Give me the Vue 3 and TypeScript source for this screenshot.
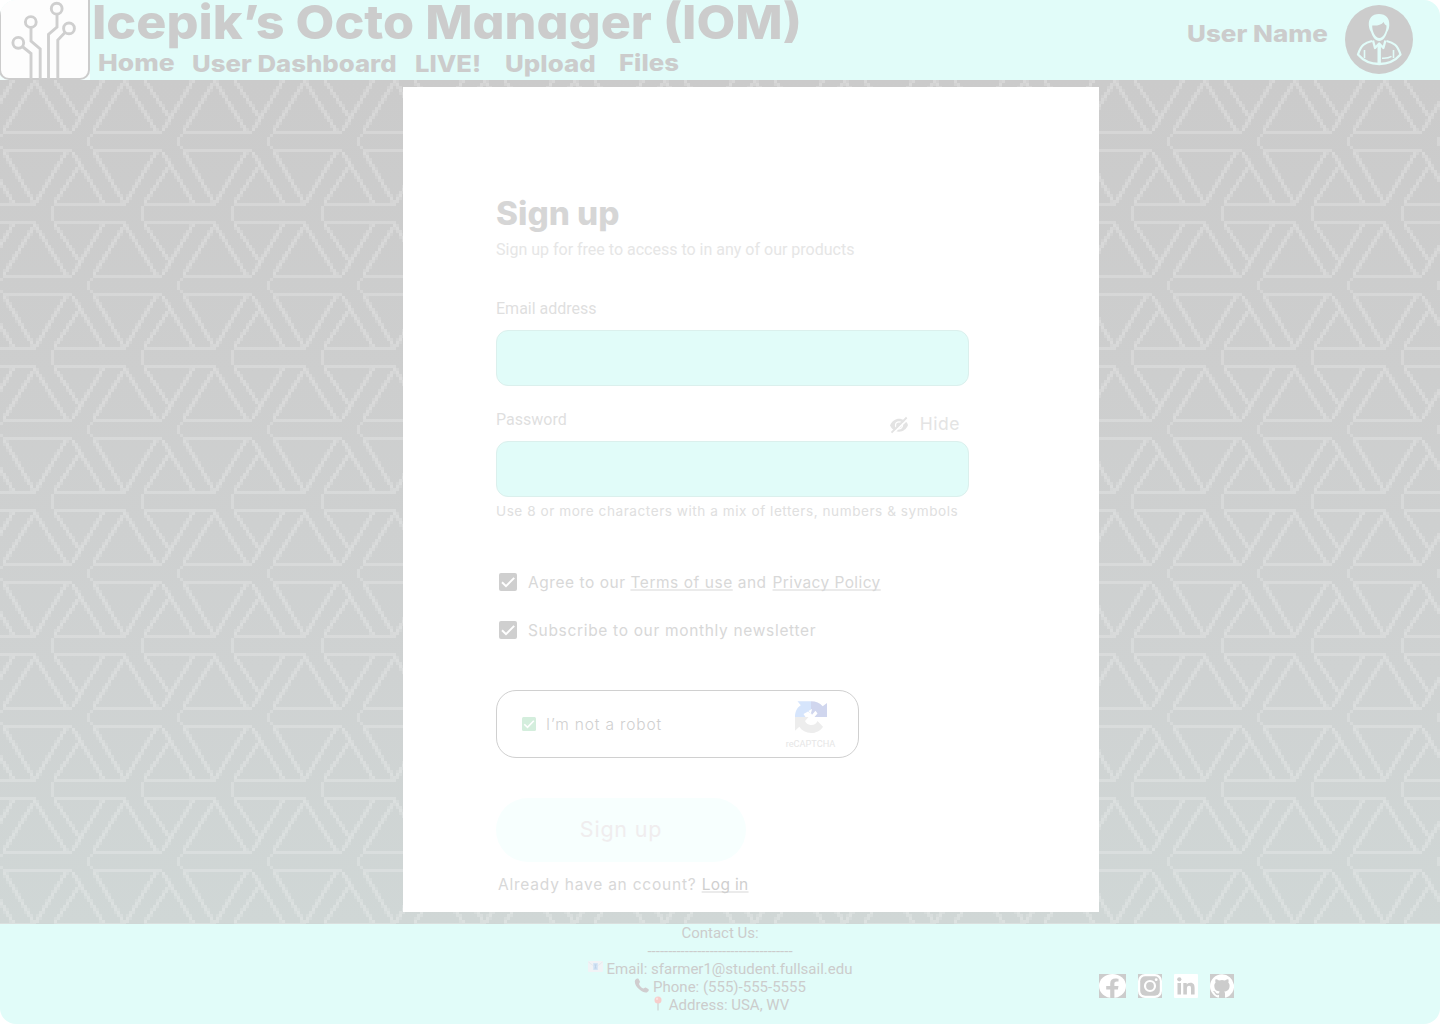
<script setup lang="ts">
interface Cell { x: number; y: number; a: number }

const COLS = 30
const ROWS = 48
const grid = new Map<string, Cell>()

function plot(x: number, y: number, a: number) {
  const cx = ((x % COLS) + COLS) % COLS
  const cy = ((y % ROWS) + ROWS) % ROWS
  const key = `${cx}:${cy}`
  const prev = grid.get(key)
  if (!prev || prev.a < a) grid.set(key, { x: cx, y: cy, a })
}

// Steep anti-aliased leg: one row at a time, coverage shared by two neighbouring cells.
function leg(x0: number, y0: number, x1: number, y1: number) {
  for (let y = y0; y <= y1; y++) {
    const x = x0 + ((x1 - x0) * (y - y0)) / (y1 - y0)
    const base = Math.floor(x)
    const part = x - base
    plot(base, y, Math.min(1.05, 1.2 - part * 0.85))
    if (part > 0.1) plot(base + 1, y, Math.min(1.05, part + 0.25))
  }
}

function bar(x0: number, x1: number, y: number) {
  for (let x = x0; x <= x1; x++) plot(x, y, 0.85)
}

// upper half of the tile
leg(11, 0, 1, 16)
leg(11.3, 0, 21.3, 16)
leg(18, 0, 26, 12)
leg(33.7, 0, 24, 16)
bar(1, 23, 17)
bar(1, 23, 23)
plot(30, 18, 0.7)
for (const y of [19, 20, 21]) plot(29, y, 0.8)
plot(30, 22, 0.7)
// lower half of the tile
leg(1.2, 24, 10.6, 40)
leg(21.3, 24, 11.6, 40)
leg(24, 24, 33.7, 40)
leg(26, 28, 18, 40)
bar(18, 41, 41)
bar(18, 41, 47)
for (const y of [42, 43, 44, 45, 46]) plot(17, y, 0.8)

const cells = [...grid.values()].map((c) => ({ x: c.x * 3, y: c.y * 3, a: +(c.a * 0.24).toFixed(3) }))

const nav = [
  { label: 'Home', low: false, cls: 'n1' },
  { label: 'User Dashboard', low: true, cls: 'n2' },
  { label: 'LIVE!', low: true, cls: 'n3' },
  { label: 'Upload', low: true, cls: 'n4' },
  { label: 'Files', low: false, cls: 'n5' },
]
</script>

<template>
  <div class="page">
    <header class="top">
      <svg class="logo" viewBox="0 0 90 80" width="90" height="80" fill="none">
        <rect width="90" height="80" fill="#f4fefd" />
        <rect x="0" y="-12" width="89" height="91" rx="9" fill="#fdfdfd" stroke="#ccc" stroke-width="2" />
        <g stroke="#cfcfcf" stroke-width="2.9">
          <circle cx="56.7" cy="8.7" r="5.4" />
          <circle cx="30.8" cy="22" r="5.4" />
          <circle cx="69" cy="28.4" r="5.4" />
          <circle cx="18.3" cy="42.8" r="5.4" />
          <path d="M57 14v13l-8.500 7.500V79M31 27.500V41l9.200 8V79M22.300 46.500L31 53.500V79M65 32.500L57.800 40V79" />
        </g>
      </svg>
      <div class="brand">
        <h1>Icepik’s Octo Manager (IOM)</h1>
        <nav>
          <a v-for="n in nav" :key="n.label" :class="[n.cls, { low: n.low }]">{{ n.label }}</a>
        </nav>
      </div>
      <div class="user">
        <span>User Name</span>
        <svg viewBox="0 0 68 69" width="68" height="69" fill="none">
          <ellipse cx="34" cy="34.500" rx="34" ry="34.500" fill="#ccc" />
          <path d="M34 9c-7 0-10.500 4.500-10.200 11 .2 3 1 5 2.200 7 1.500 5 4.500 9 8.200 9s6.500-4 8-9c1.300-2 2-4 2.100-7C44.500 13 41 9 34 9z" fill="#e1fcf9" />
          <path d="M27.200 20.500c4.500.5 9-.5 11.500-3.500.5 1.800 1.500 2.800 2.800 3.500.3 5.500-3 12.500-7.200 12.500s-7.300-7-7.100-12.500z" fill="#ccc" />
          <g stroke="#e1fcf9" stroke-width="2.300" stroke-linejoin="round">
            <path d="M27 36c-7 1.500-11 4-14 13.500 5.500 6.500 13 9.500 21.200 9.500S50 56 55.500 49.500C52.500 40 48.500 37.500 41.500 36" />
            <path d="M28 35.500l2 7.500 4.200-4.500 4.200 4.500 2-7.500" />
            <path d="M34.200 40v18" stroke-width="3.400" />
            <path d="M19.500 45v8M48.500 45v8M37 53.200c4 .3 7-.2 9.500-1.800" stroke-width="1.600" />
          </g>
        </svg>
      </div>
    </header>

    <main class="stage">
      <svg class="weave" width="100%" height="100%">
        <defs>
          <pattern id="weave" width="90" height="144" patternUnits="userSpaceOnUse">
            <rect v-for="c in cells" :key="`${c.x}-${c.y}`" :x="c.x" :y="c.y" width="3" height="3" fill="#fff" :fill-opacity="c.a" />
          </pattern>
        </defs>
        <rect width="100%" height="100%" fill="url(#weave)" />
      </svg>

      <section class="card">
        <h2>Sign up</h2>
        <p class="sub">Sign up for free to access to in any of our products</p>

        <label class="lbl first">Email address</label>
        <div class="field"></div>

        <div class="pwrow">
          <label class="lbl">Password</label>
          <div class="hide">
            <svg viewBox="0 0 20 18" width="20" height="18" fill="none">
              <path d="M1 9.500C3 5 6.500 2.800 10 2.800S17.500 5 19 9c-1.500 4-5 6.700-9 6.700S3 13.500 1 9.500z" fill="#e3e3e3" />
              <circle cx="10" cy="9.300" r="3.500" stroke="#fff" stroke-width="1.300" />
              <path d="M3.800 17.700L19.300 2.600" stroke="#fff" stroke-width="1.800" />
              <path d="M2.500 16.700L17.700 1.500" stroke="#e3e3e3" stroke-width="1.900" />
            </svg>
            <span>Hide</span>
          </div>
        </div>
        <div class="field"></div>
        <p class="hint">Use 8 or more characters with a mix of letters, numbers &amp; symbols</p>

        <div class="check c1">
          <svg viewBox="0 0 18 18" width="18" height="18"><rect width="18" height="18" rx="2" fill="#cfcfcf" /><path d="M3 9.200l4 4 8.200-8.300" fill="none" stroke="#fff" stroke-width="2" /></svg>
          <span>Agree to our <u>Terms of use</u> and <u class="pp">Privacy Policy</u></span>
        </div>
        <div class="check c2">
          <svg viewBox="0 0 18 18" width="18" height="18"><rect width="18" height="18" rx="2" fill="#cfcfcf" /><path d="M3 9.200l4 4 8.200-8.300" fill="none" stroke="#fff" stroke-width="2" /></svg>
          <span>Subscribe to our monthly newsletter</span>
        </div>

        <div class="captcha">
          <svg viewBox="0 0 14 14" width="14" height="14"><rect width="14" height="14" rx="1.500" fill="#d4eedd" /><path d="M2.300 7.200l3.200 3.100 6.300-6.500" fill="none" stroke="#fff" stroke-width="1.600" /></svg>
          <span class="robot">I’m not a robot</span>
          <div class="rc">
            <svg viewBox="0 0 32 32" width="32" height="32">
              <path d="M0 16C0 10.500 2 6.500 5.800 4.200L2.500.300H16v8.200l-2.500 1.500L16 13l-3-2.500L8.500 13l2 3z" fill="#d6e5fc" />
              <path d="M16 .300c5 0 8.800 1.700 11.700 4.900L32 2v14H19.500l3-3.500-2-2.800-3.500 4-1-1.700 1-3.500-1-.5z" fill="#d0d6ee" />
              <path d="M0 16v13.800l4.300-4C7 29.800 11 32 16 32s9.500-2.300 12-6.300L22.500 20c-1.200 3-3.500 4.300-7 4-2.600-.4-4.500-1.800-5.500-4l3.500-4z" fill="#ededed" />
            </svg>
            <small>reCAPTCHA</small>
          </div>
        </div>

        <button type="button"><span>Sign up</span></button>
        <p class="login">Already have an ccount? <u>Log in</u></p>
      </section>
    </main>

    <footer class="foot">
      <div class="contact">
        <p>Contact Us:</p>
        <p>-----------------------------------</p>
        <p>
          <svg class="e" viewBox="0 0 15 14" width="15" height="14"><rect y="1" width="15" height="11" rx="1" fill="#f1f3f6" /><path d="M.5 2l7 5.500 7-5.500" fill="none" stroke="#e2e8ec" stroke-width=".8" /><rect x="5.200" y="3" width="4.600" height="7" fill="#d3e4f5" /><path d="M6.300 4.900h2.400M7.500 4.900v3.200M6.300 8.100h2.400" stroke="#bdd2e8" stroke-width=".8" /></svg>
          <span>Email: sfarmer1@student.fullsail.edu</span>
        </p>
        <p>
          <svg class="e" viewBox="0 0 15 15" width="15" height="15"><path d="M1 2.500C2 .500 4 0 4.600 1l1.300 2.500c.4.800-.8 1.700-.8 2.400 0 1.300 3 4.500 4.300 4.500.8 0 1.500-1.200 2.300-.8l2.600 1.500c1 .7.400 2.600-1.400 3.300C8 15.500-.500 7.500 1 2.500z" fill="#d0cdcf" /></svg>
          <span>Phone: (555)-555-5555</span>
        </p>
        <p>
          <svg class="e" viewBox="0 0 14 15" width="14" height="15"><path d="M7 7v7.500" stroke="#cfd6d6" stroke-width="1.300" /><circle cx="7" cy="4" r="3.500" fill="#f6cdcb" /><circle cx="6" cy="2.800" r="1.200" fill="#fbe0de" /></svg>
          <span>Address: USA, WV</span>
        </p>
      </div>
      <div class="social">
        <svg viewBox="0 0 27 24" width="27" height="24"><rect width="27" height="24" fill="#ccc" /><ellipse cx="13.500" cy="12" rx="13.500" ry="12" fill="#fff" /><path d="M11.200 24v-8.500H7.200V12h4V9.400c0-3.200 2-5 5.200-5 1.700 0 3.100.3 3.100.3v2.900h-1.700c-1.800 0-2.400 1-2.400 2V12h4.100l-.6 3.500h-3.500V24z" fill="#ccc" /></svg>
        <svg viewBox="0 0 24 24" width="24" height="24"><rect width="24" height="24" fill="#ccc" /><rect width="24" height="24" rx="7" fill="#fff" /><rect x="2.200" y="2.200" width="19.600" height="19.600" rx="5" fill="#ccc" /><circle cx="12" cy="12" r="5" fill="none" stroke="#fff" stroke-width="2.200" /><circle cx="18.200" cy="5.700" r="1.400" fill="#fff" /></svg>
        <svg viewBox="0 0 24 24" width="24" height="24"><rect width="24" height="24" rx="1" fill="#fff" /><path d="M3.500 9H7v11.500H3.500z M9.300 9h3.400v1.600c.6-1 1.800-1.900 3.600-1.900 3.600 0 4.300 2.300 4.300 5.400v6.400H17v-5.700c0-1.400 0-3.100-1.900-3.100s-2.200 1.500-2.200 3v5.800H9.300z" fill="#ccc" /><circle cx="5.300" cy="5.300" r="2.100" fill="#ccc" /></svg>
        <svg viewBox="0 0 24 24" width="24" height="24"><rect width="24" height="24" fill="#ccc" /><path d="M12 .300C5.400.300 0 5.700 0 12.300c0 5.300 3.400 9.800 8.200 11.400.6.100.8-.3.8-.6v-2c-3.300.7-4-1.600-4-1.600-.6-1.400-1.400-1.800-1.400-1.800-1-.7.100-.7.100-.7 1.200 0 1.900 1.200 1.900 1.200 1 1.800 2.800 1.300 3.500 1 0-.8.400-1.300.7-1.600-2.700-.3-5.500-1.300-5.500-6 0-1.200.5-2.300 1.300-3.100-.2-.4-.6-1.600 0-3.200 0 0 1-.3 3.400 1.200a11.500 11.500 0 0 1 6 0c2.300-1.500 3.300-1.200 3.300-1.200.6 1.600.2 2.800 0 3.200.9.800 1.300 1.900 1.300 3.200 0 4.600-2.800 5.600-5.500 5.900.5.400.9 1 .9 2.200v3.300c0 .3.100.7.800.6A12 12 0 0 0 12 .300" fill="#fff" /></svg>
      </div>
    </footer>
  </div>
</template>

<style>
body {
  margin: 0;
  background: #fff;
}
</style>

<style scoped>
.page {
  width: 1440px;
  height: 1024px;
  border-radius: 16px;
  overflow: hidden;
  display: flex;
  flex-direction: column;
  background: #e1fcf9;
  font-family: Inter, "Liberation Sans", sans-serif;
  color: #ccc;
}
h1, h2, p {
  margin: 0;
}
svg {
  display: block;
  flex: none;
}
.top {
  height: 80px;
  display: flex;
}
.brand {
  flex: 1;
  padding-left: 2px;
}
h1 {
  width: 660px;
  height: 44px;
  font-size: 47px;
  line-height: 44px;
  font-weight: 800;
  white-space: nowrap;
  font-feature-settings: "cv11";
  transform: scaleX(1.069);
  transform-origin: 0 0;
}
nav {
  display: grid;
  grid-template-columns: 94.500px 222.500px 90px 114.500px auto;
  padding-left: 5.500px;
  height: 36px;
  justify-items: start;
}
nav a, .user span {
  font-size: 23px;
  line-height: 38px;
  font-weight: 800;
  white-space: nowrap;
  transform-origin: 0 0;
}
nav .low { margin-top: 1px; }
.n1 { transform: scaleX(1.15); }
.n2 { transform: scaleX(1.12); }
.n3 { transform: scaleX(1.11); }
.n4 { transform: scaleX(1.125); }
.n5 { transform: scaleX(1.12); }
.user {
  display: flex;
  padding-right: 27px;
}
.user span {
  width: 158.500px;
  padding-top: 15px;
  transform: scaleX(1.13);
}
.user svg {
  margin-top: 5px;
}
.stage {
  position: relative;
  height: 844px;
  display: flex;
  align-items: flex-start;
  padding-left: 403px;
  box-sizing: border-box;
  background: linear-gradient(#cbcbcb, #cdcece 35%, #cfd2d2 70%, #d0d7d6);
}
.weave {
  position: absolute;
  inset: 0;
}
.card {
  position: relative;
  width: 696px;
  height: 825px;
  margin-top: 7px;
  padding: 103px 130px 0 93px;
  box-sizing: border-box;
  background: #fff;
}
h2 {
  width: 120px;
  font-size: 32px;
  line-height: 48px;
  font-weight: 800;
  color: #d6d6d6;
  white-space: nowrap;
  transform: scaleX(1.04);
  transform-origin: 0 0;
}
.sub, .lbl {
  display: block;
  font: 400 16px/24px Roboto, sans-serif;
}
.sub { color: #e6e6e6; }
.lbl { color: #dfdfdf; }
.first { margin: 35px 0 9px; }
.field {
  height: 56px;
  box-sizing: border-box;
  border: 1px solid #dbf0ed;
  border-radius: 12px;
  background: #e1fcf9;
}
.pwrow {
  height: 55px;
  display: flex;
  justify-content: space-between;
}
.pwrow .lbl { padding-top: 22px; }
.hide {
  display: flex;
  padding: 24px 9px 0 0;
  gap: 11px;
  font-size: 17.5px;
  line-height: 27px;
  letter-spacing: 0.5px;
  color: #e4e4e4;
}
.hide svg { margin-top: 6px; }
.hint {
  padding-top: 3.500px;
  font-size: 13.6px;
  line-height: 21px;
  letter-spacing: 0.54px;
  color: #e0e0e0;
  white-space: nowrap;
}
.check {
  display: flex;
  align-items: center;
  gap: 11px;
  height: 24px;
  padding-left: 3px;
  font-size: 15.5px;
  line-height: 24px;
  color: #d8d8d8;
  letter-spacing: 0.54px;
  white-space: nowrap;
}
.check span { padding-top: 2px; }
.c1 { margin-top: 48.500px; }
.c2 { margin-top: 24px; letter-spacing: 0.67px; }
.pp { letter-spacing: 0.4px; margin-left: 1px; }
u {
  text-decoration: underline 2px #ebebeb;
  text-underline-offset: 1px;
  text-decoration-skip-ink: none;
}
.captcha {
  width: 363px;
  height: 68px;
  margin-top: 48px;
  box-sizing: border-box;
  border: 1px solid #d0d0d0;
  border-radius: 20px;
  display: flex;
  align-items: center;
  padding: 0 22px 0 25px;
}
.robot {
  margin-left: 10px;
  font-size: 15.5px;
  font-weight: 300;
  letter-spacing: 0.85px;
  color: #d0d0d0;
}
.rc {
  margin-left: auto;
  padding-top: 2px;
  width: 51px;
  display: flex;
  flex-direction: column;
  align-items: center;
}
.rc small {
  margin-top: 5px;
  font: 400 9.2px/12px Roboto, sans-serif;
  color: #e6e6e6;
}
button {
  display: block;
  width: 250px;
  height: 64px;
  margin-top: 40px;
  padding: 0 0 2px;
  border: 0;
  border-radius: 32px;
  background: #f7fffe;
  color: #f0edee;
  font: 400 21.5px/60px Inter, sans-serif;
  letter-spacing: 0.8px;
}
.login {
  padding: 10.500px 0 0 2px;
  font-size: 15.5px;
  line-height: 24px;
  letter-spacing: 0.78px;
  color: #d8d8d8;
}
.login u { color: #cfcfcf; letter-spacing: 0.35px; }
.foot {
  height: 100px;
  display: flex;
  justify-content: space-between;
  padding-right: 206px;
}
.contact {
  width: 400px;
  margin-left: 520px;
  font: 400 15px/18px Roboto, sans-serif;
}
.contact p {
  display: flex;
  justify-content: center;
  gap: 4px;
  height: 18px;
}
.social {
  display: flex;
  gap: 12px;
  margin-top: 50px;
  height: 24px;
}
</style>
